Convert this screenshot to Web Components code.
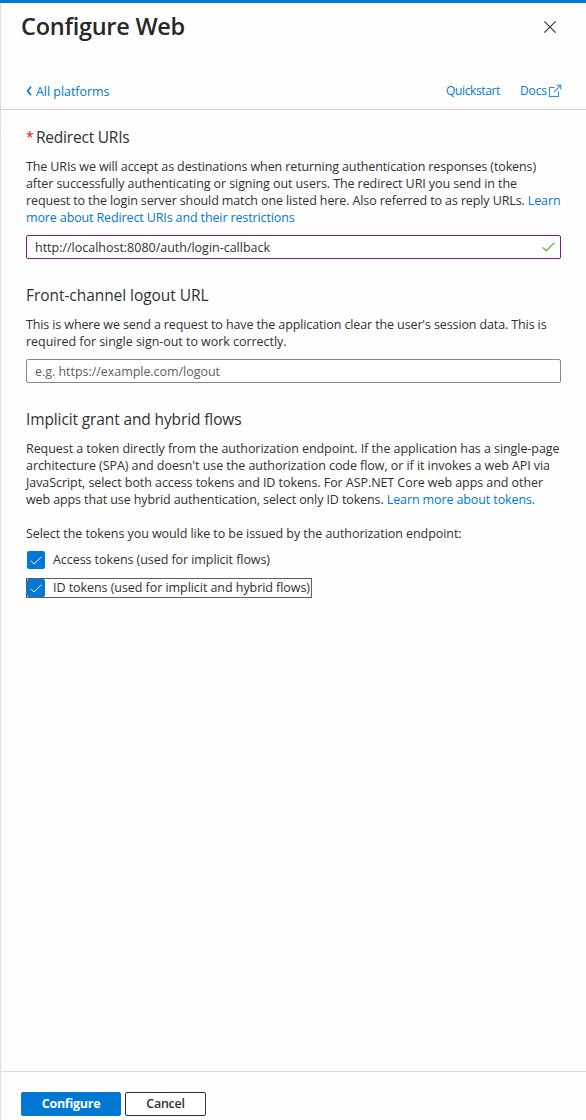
<!DOCTYPE html>
<html lang="en">
<head>
<meta charset="utf-8">
<title>Configure Web</title>
<style>
html,body{margin:0;height:100%;background:#fefefe}
body{font-family:"Open Sans","Noto Sans",sans-serif;font-size:12.5px;line-height:17px;color:#323130;overflow:hidden}
</style>
</head>
<body>
<config-panel></config-panel>
<script>
const define = (name, html, setup) => customElements.define(name, class extends HTMLElement {
  connectedCallback() {
    if (this.shadowRoot) return;
    const t = document.createElement('template');
    t.innerHTML = html;
    this.attachShadow({mode: 'open'}).append(t.content.cloneNode(true));
    if (setup) setup(this, this.shadowRoot);
  }
});

// One line of text, tracked so that it spans the width in its "w" attribute.
define('text-line', `<style>:host{display:block;width:max-content;white-space:nowrap}</style><slot></slot>`, el => {
  const n = el.textContent.length, w = el.getBoundingClientRect().width;
  el.style.letterSpacing = ((+el.getAttribute('w') - w) / n).toFixed(4) + 'px';
});

define('app-link', `<style>:host{display:inline;color:#0078d4;cursor:pointer}</style><slot></slot>`);

define('panel-title', `<style>:host{display:flex;justify-content:space-between;align-items:center;height:48px;padding:0 30px 0 20px;font-size:23.5px;font-weight:600;line-height:32px;color:#292827}
::slotted(*){padding-bottom:2px}
svg{display:block}</style><slot></slot>
<svg width="12" height="12" viewBox="0 0 12 12" fill="none" stroke="#323130" stroke-width="1.1"><path d="M.4.4 11.6 11.6M11.6.4.4 11.6"/></svg>`);

define('panel-nav', `<style>:host{display:flex;align-items:center;height:36px;margin-top:22px;padding:0 24px 0 25px;border-bottom:1px solid #d2d0ce;color:#0078d4}
.back{margin-right:auto;display:flex;align-items:center;gap:4px}
.docs{display:flex;align-items:center;margin-left:20px;gap:1px}
.small{font-size:12px;padding-bottom:1px}svg{display:block}</style>
<div class="back"><svg width="6" height="10" viewBox="0 0 6 10" fill="none" stroke="#0078d4" stroke-width="1.6"><path d="M5 .8 1.6 5 5 9.2"/></svg><text-line w="73.5">All platforms</text-line></div>
<text-line class="small" w="54">Quickstart</text-line>
<div class="docs"><text-line class="small" w="27">Docs</text-line><svg width="14" height="14" viewBox="0 0 14 14" fill="none" stroke="#3c88dc" stroke-width="1.1"><path d="M6.5 3.5H1.5V12.5H10.5V7.3M8.6 1.2H12.8V5.4M12.6 1.4 5.9 8.1"/></svg></div>`);

define('section-heading', `<style>:host{display:flex;font-size:15.5px;line-height:22px;height:22px;color:#323130}
.req{color:#f01010;width:10px;font-size:14px;display:none}:host([required]) .req{display:block}</style><span class="req">*</span><slot></slot>`);

define('text-field', `<style>:host{display:flex;align-items:center;justify-content:space-between;box-sizing:border-box;height:24px;width:535px;padding:0 5px 0 8px;border:1px solid #8a8886;border-radius:2px;background:#fff;color:#605e5c}
:host([valid]){border-color:#881798;color:#323130}
svg{display:none}:host([valid]) svg{display:block}</style><slot></slot>
<svg width="13" height="10" viewBox="0 0 13 10" fill="none" stroke="#6bb32d" stroke-width="1.3"><path d="M.7 5.4 4.2 8.8 12.3.9"/></svg>`);

define('check-option', `<style>:host{display:flex;box-sizing:border-box;align-items:center;width:286px;height:20px;gap:8px;padding-left:1px;border:0 solid #605e5c}
:host([focused]){border-width:1px;padding-left:0}
::slotted(*){padding-bottom:2px}
.box{width:18px;height:18px;border-radius:2px;background:#0078d4;display:grid;place-items:center}svg{display:block}</style>
<div class="box"><svg width="12" height="9" viewBox="0 0 12 9" fill="none" stroke="#fff" stroke-width="1"><path d="M.7 4.7 4.1 8 11.3.8"/></svg></div><slot></slot>`);

define('push-button', `<style>:host{display:flex;align-items:center;justify-content:center;box-sizing:border-box;width:81px;height:24px;border:1px solid #323130;border-radius:2px;background:#fff;font-weight:600;color:#323130}
::slotted(*){padding-bottom:2px}
:host([primary]){width:100px;background:#0078d4;border-color:#0078d4;color:#fff;font-weight:700}</style><slot></slot>`);

define('config-panel', `<style>:host{display:flex;flex-direction:column;box-sizing:border-box;height:1120px;border-top:3px solid #0078d4;background:linear-gradient(#d2d0ce,#d2d0ce) 0 128px/1px 1px no-repeat,linear-gradient(#e1dfdd,#e1dfdd) 0 0/1px 100% no-repeat #fefefe;padding-left:1px}
main{flex:1;padding:16px 25px 0}
section{height:158px}
section.logout{height:124px}
.copy{margin:10px 0 9px}
.prompt{margin:17px 0 8px}
.options{display:flex;flex-direction:column;gap:8px}
footer{display:flex;gap:4px;height:28px;padding:20px 20px 0;border-top:1px solid #dcdcdc}</style>
<panel-title><text-line w="164">Configure Web</text-line></panel-title>
<panel-nav></panel-nav>
<main>
<section><section-heading required><text-line w="93.5">Redirect URIs</text-line></section-heading>
<div class="copy">
<text-line w="510">The URIs we will accept as destinations when returning authentication responses (tokens)</text-line>
<text-line w="491">after successfully authenticating or signing out users. The redirect URI you send in the</text-line>
<text-line w="534.5">request to the login server should match one listed here. Also referred to as reply URLs. <app-link>Learn</app-link></text-line>
<text-line w="268.5"><app-link>more about Redirect URIs and their restrictions</app-link></text-line>
</div>
<text-field valid><text-line w="235">http://localhost:8080/auth/login-callback</text-line></text-field></section>
<section class="logout"><section-heading><text-line w="182.5">Front-channel logout URL</text-line></section-heading>
<div class="copy">
<text-line w="520.5">This is where we send a request to have the application clear the user's session data. This is</text-line>
<text-line w="260.5">required for single sign-out to work correctly.</text-line>
</div>
<text-field><text-line w="185">e.g. https://example.com/logout</text-line></text-field></section>
<section-heading><text-line w="215.5">Implicit grant and hybrid flows</text-line></section-heading>
<div class="copy">
<text-line w="533.5">Request a token directly from the authorization endpoint. If the application has a single-page</text-line>
<text-line w="524">architecture (SPA) and doesn't use the authorization code flow, or if it invokes a web API via</text-line>
<text-line w="517">JavaScript, select both access tokens and ID tokens. For ASP.NET Core web apps and other</text-line>
<text-line w="509">web apps that use hybrid authentication, select only ID tokens. <app-link>Learn more about tokens.</app-link></text-line>
</div>
<div class="prompt"><text-line w="435.5">Select the tokens you would like to be issued by the authorization endpoint:</text-line></div>
<div class="options">
<check-option><text-line w="217">Access tokens (used for implicit flows)</text-line></check-option>
<check-option focused><text-line w="257">ID tokens (used for implicit and hybrid flows)</text-line></check-option>
</div>
</main>
<footer><push-button primary><text-line w="58.5">Configure</text-line></push-button><push-button><text-line w="38.5">Cancel</text-line></push-button></footer>`);
</script>
</body>
</html>
